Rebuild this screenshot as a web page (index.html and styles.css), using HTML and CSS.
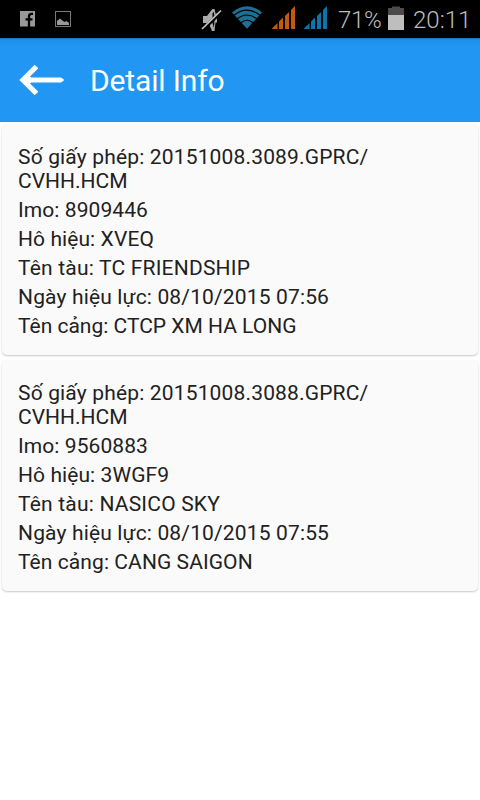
FILE: index.html
```html
<!DOCTYPE html>
<html lang="vi">
<head>
<meta charset="utf-8">
<title>Detail Info</title>
<link rel="stylesheet" href="styles.css">
</head>
<body>
<div class="status">
  <svg class="notices" width="80" height="38" viewBox="0 0 80 38">
    <path fill="#999" d="M20 11h15v15.500H20z"/>
    <path d="M33 13.800h-1.500q-2.500 0-2.500 2.700V27M25.500 19.300h7" fill="none" stroke="#000" stroke-width="2.300"/>
    <rect x="55.500" y="11.500" width="15" height="15" fill="none" stroke="#777"/>
    <path fill="#999" d="M57 25v-4l3-2.500 3 2.500 1.500 1 2-1 2.500 2V25z"/>
  </svg>
  <svg class="signals" width="132" height="38" viewBox="200 0 132 38">
    <path fill="#aaa" d="M203 16h4l3-4 2.500-3h2l1 4.500h1.500v9h-1.500l-1 8.500h-2.500l-3-7-3-1h-3z"/>
    <path fill="#000" d="M212.500 13l1.500-1 .5 7-.5 9-1.500-5z"/>
    <path d="M203 29.500L222 11" stroke="#000" stroke-width="3.500"/>
    <path d="M202 29L221 10.500" stroke="#c4c4c4" stroke-width="1.700"/>
    <path fill="#1e6f91" d="M232 12.500Q247 0 262 12.500L247 28.800z"/>
    <path d="M234 15.200Q247 5 260 15.200M237 19Q247 11 257 19M240.500 23Q247 17.500 253.500 23" fill="none" stroke="#000" stroke-width="1.100"/>
    <path fill="#c5590d" d="M271.500 29l6-6v6zM279 21.500l4-4V29h-4zM285 16l4-4v17h-4zM291 10l4-4v23h-4z"/>
    <path fill="#0a76ac" d="M303.500 29l6-6v6zM311 21.500l4-4V29h-4zM317 16l4-4v17h-4zM323 10l4-4v23h-4z"/>
  </svg>
  <span class="percent">71%</span>
  <svg class="battery" width="16" height="38" viewBox="0 0 16 38">
    <path fill="#4b4b4b" d="M0 8h4V6.500h8V8h4v7H0z"/>
    <path fill="#bebebe" d="M0 15h16v15H0z"/>
  </svg>
  <span class="clock">20:11</span>
</div>
<header class="bar">
  <svg class="back" width="46" height="36" viewBox="0 0 46 36">
    <path d="M17.500 4.500L4 18l13.500 13.500M4 18h38" fill="none" stroke="#fff" stroke-width="5.200"/>
    <path d="M1 18l4-4 7 1v6L5 22zM42 15.400l3.500 2.600-3.500 2.600z" fill="#fff"/>
  </svg>
  <h1>Detail Info</h1>
</header>
<main class="list">
  <section class="card">
    <p class="permit">Số giấy phép: 20151008.3089.GPRC/<br><span class="plain">CVHH.HCM</span></p>
    <p class="imo">Imo: 8909446</p>
    <p>Hô hiệu: XVEQ</p>
    <p class="ship">Tên tàu: TC FRIENDSHIP</p>
    <p class="date">Ngày hiệu lực: 08/10/2015 07:56</p>
    <p class="plain">Tên cảng: CTCP XM HA LONG</p>
  </section>
  <section class="card">
    <p class="permit">Số giấy phép: 20151008.3088.GPRC/<br><span class="plain">CVHH.HCM</span></p>
    <p class="imo">Imo: 9560883</p>
    <p>Hô hiệu: 3WGF9</p>
    <p class="ship">Tên tàu: NASICO SKY</p>
    <p class="date">Ngày hiệu lực: 08/10/2015 07:55</p>
    <p>Tên cảng: CANG SAIGON</p>
  </section>
</main>
</body>
</html>
```

FILE: styles.css
```css
* { box-sizing: border-box; }
body {
  margin: 0;
  min-height: 800px;
  background: #fff;
  color: #212121;
  font-family: Roboto, "Noto Sans", sans-serif;
}
.status {
  display: flex;
  height: 38px;
  background: #000;
  color: #bebebe;
  font-size: 24px;
  font-weight: 300;
  line-height: 40px;
}
.status svg { flex: none; }
.signals { margin-left: 120px; }
.percent { width: 50px; margin-left: 6px; letter-spacing: -.3px; white-space: nowrap; }
.clock { margin-left: 9px; white-space: nowrap; }
.bar {
  display: flex;
  align-items: center;
  height: 84px;
  padding-left: 19px;
  background: linear-gradient(#1c72b8, #2090ea 2px, #2196f3 8px);
  color: #fff;
}
.bar h1 {
  margin: 1px 0 0 25px;
  font-size: 30px;
  font-weight: 400;
  line-height: 37px;
  letter-spacing: -.15px;
}
.list {
  display: flex;
  flex-direction: column;
  gap: 5px;
  padding: 2px;
}
.card {
  display: flex;
  flex-direction: column;
  gap: 5px;
  height: 231px;
  padding: 21px 16px 0;
  border-radius: 5px;
  background: #fafafa;
  box-shadow: 0 1px 2px rgba(0, 0, 0, .22);
}
.card p {
  margin: 0;
  font-size: 21px;
  line-height: 24px;
  letter-spacing: .08px;
  white-space: nowrap;
}
.card .permit { letter-spacing: .16px; }
.card .date { letter-spacing: .15px; }
.card .ship { letter-spacing: .2px; }
.card .plain { letter-spacing: 0; }
```
